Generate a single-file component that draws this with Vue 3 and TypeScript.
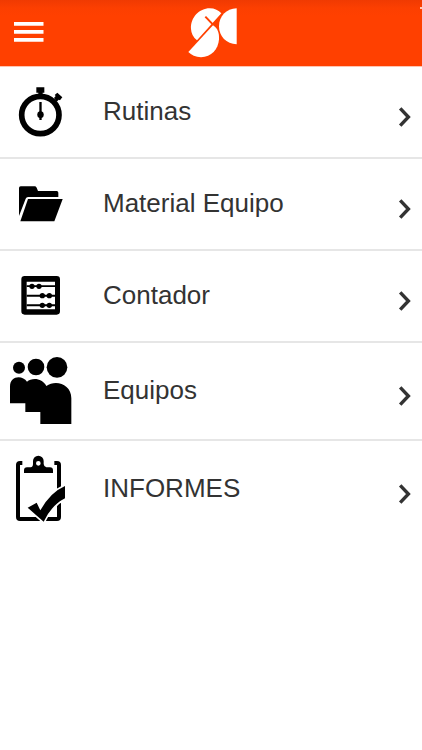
<script setup lang="ts">
type IconName = 'stopwatch' | 'folder' | 'abacus' | 'people' | 'clipboard'

interface MenuItem {
  label: string
  icon: IconName
  tall?: boolean
}

const items: MenuItem[] = [
  { label: 'Rutinas', icon: 'stopwatch' },
  { label: 'Material Equipo', icon: 'folder' },
  { label: 'Contador', icon: 'abacus' },
  { label: 'Equipos', icon: 'people', tall: true },
  { label: 'INFORMES', icon: 'clipboard', tall: true },
]
</script>

<template>
  <div class="screen">
    <header class="bar">
      <button class="menu" type="button" aria-label="Menú">
        <svg viewBox="0 0 30 22" width="30" height="22" fill="#fff">
          <path d="M0 0h29.5v3.8H0zM0 8h29.5v3.8H0zM0 16h29.5v3.8H0z" />
        </svg>
      </button>
      <svg class="logo" viewBox="54 20 150 156" width="50" height="52" aria-hidden="true">
        <path fill="#fff" d="M81 120A46 46 0 0 1 63 86C61 52 88 24 119 24C134 24 146 30 154 39Z" />
        <path fill="#fff" d="M129 75C143 84 148 98 147 117C145 146 124 171 93 171C77 170 64 164 55 155Z" />
        <path fill="#fff" d="M200 24V132C169 131 147 108 147 78C147 48 169 25 200 24Z" />
        <path fill="none" stroke="#ff4000" stroke-width="6" d="M106 49L129 73" />
      </svg>
      <span class="corner"></span>
    </header>

    <nav>
      <ul class="list">
        <li v-for="item in items" :key="item.label">
          <a class="row" :class="{ tall: item.tall }" href="#">
            <svg v-if="item.icon === 'stopwatch'" class="icon" viewBox="0 -27 240 276">
              <circle cx="121" cy="120" r="56" fill="none" stroke="#000" stroke-width="17" />
              <path d="M109 37h24v16h-5v14h-13V53h-6zM162 69l5-6-3-3 8-7 15 14-7 9-4-2-6 6zM118 81h7v28a11 11 0 0 1 0 20v6h-7v-6a11 11 0 0 1 0-20z" />
            </svg>
            <svg v-else-if="item.icon === 'folder'" class="icon" viewBox="0 -36 240 276">
              <path d="M57 138V54q0-5 5-5h42q4 0 6 4l4 10h56q5 0 5 5v13H84q-5 0-7 5z" />
              <path d="M84 87H188L163 154H61Z" />
            </svg>
            <svg v-else-if="item.icon === 'abacus'" class="icon" viewBox="0 -30 240 276">
              <path fill-rule="evenodd" d="M74 48h96q10 0 10 10v96q0 10-10 10H74q-10 0-10-10V58q0-10 10-10zM80 65v83h85V65z" />
              <path d="M80 76h85v5H80zM80 104h85v6H80zM80 133h85v6H80z" />
              <circle cx="96" cy="79" r="8" />
              <circle cx="117" cy="79" r="8" />
              <circle cx="127" cy="107" r="8" />
              <circle cx="148" cy="107" r="8" />
              <circle cx="127" cy="136" r="8" />
              <circle cx="148" cy="136" r="8" />
            </svg>
            <svg v-else-if="item.icon === 'people'" class="icon" viewBox="0 -9 240 294">
              <circle cx="57" cy="68" r="18" />
              <circle cx="108" cy="66" r="25" />
              <circle cx="171" cy="67" r="31" />
              <path d="M30 175V124C30 91 68 90 81 110C95 97 127 98 139 123C167 103 214 117 214 160V237H121V201H76V175Z" />
            </svg>
            <svg v-else class="icon" viewBox="0 -15 240 294">
              <path fill="none" stroke="#000" stroke-width="12" d="M67 54H60Q54 54 54 60V216Q54 222 60 222H171Q177 222 177 216V60Q177 54 171 54H163" />
              <path fill-rule="evenodd" d="M72 84V76Q72 67 81 67H92Q99 66 99 57V48A16 16 0 0 1 131 48V57Q132 66 139 67H150Q159 67 159 76V84ZM115 48a7 7 0 1 0 0 14a7 7 0 1 0 0-14z" />
              <path stroke="#fff" stroke-width="10" stroke-linejoin="miter" paint-order="stroke" d="M83 188L110 173L121 196Q151 142 195 123V160Q154 181 131 230Z" />
            </svg>
            <span class="label">{{ item.label }}</span>
            <svg class="chevron" viewBox="0 0 14 30" width="14" height="30" aria-hidden="true">
              <path d="M2.2 11.4L10.4 20L2.2 28.6" fill="none" stroke="#333" stroke-width="3.4" />
            </svg>
          </a>
        </li>
      </ul>
    </nav>
  </div>
</template>

<style>
body {
  margin: 0;
  background: #fff;
}
</style>

<style scoped>
.screen {
  font-family: "Liberation Sans", Arial, sans-serif;
  color: #333;
}

.bar {
  position: relative;
  display: grid;
  grid-template-columns: 1fr auto 1fr;
  align-items: center;
  height: 66px;
  padding: 0 14px;
  border-bottom: 1px solid #ffc4b0;
  background: linear-gradient(#f03a02, #fc3f01 8px, #ff4000 16px);
}

.menu {
  display: flex;
  justify-self: start;
  padding: 0;
  border: 0;
  background: none;
  cursor: pointer;
}

.logo {
  margin-left: 4px;
}

.corner {
  position: absolute;
  top: 7px;
  right: 0;
  width: 2px;
  height: 2px;
  background: #ffc9b5;
}

.list {
  margin: 0;
  padding: 0;
  list-style: none;
}

.list li + li {
  border-top: 2px solid #e6e6e6;
}

.row {
  display: flex;
  align-items: center;
  height: 90px;
  padding-right: 10px;
  color: inherit;
  text-decoration: none;
}

.row.tall {
  height: 96px;
}

.icon {
  flex: none;
  width: 80px;
  height: 92px;
}

.tall .icon {
  height: 98px;
}

.label {
  flex: 1;
  padding: 0 0 2px 23px;
  font-size: 26px;
  line-height: 30px;
}

.chevron {
  flex: none;
}
</style>
